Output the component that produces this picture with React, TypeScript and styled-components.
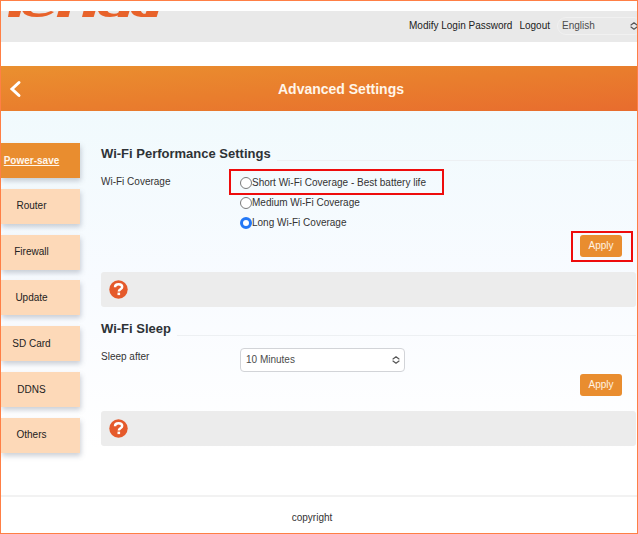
import React, { useState } from "react";
import styled, { createGlobalStyle } from "styled-components";

const Global = createGlobalStyle`
  *, *::before, *::after { box-sizing: border-box; }
  body {
    margin: 0;
    background: #fff;
    color: #333;
    font-family: "Liberation Sans", Arial, Helvetica, sans-serif;
    font-size: 10px;
    line-height: 20px;
  }
`;

const Page = styled.div`
  display: flex;
  flex-direction: column;
  min-height: 100vh;
  border: 1px solid #ff7f45;
  padding-top: 10px;
  overflow: hidden;
`;

const TopBar = styled.header`
  display: flex;
  justify-content: space-between;
  align-items: flex-start;
  height: 31px;
  padding-left: 7px;
  background: #e9e9e9;
`;

const Logo = styled.svg`
  display: block;
  width: 152px;
  height: 6px;
`;

const TopNav = styled.nav`
  display: flex;
  align-items: center;
  gap: 7px;
  padding-top: 5px;
`;

const TopLink = styled.a`
  color: #222;
  text-decoration: none;
  white-space: nowrap;
`;

const SelectBox = styled.div<{ $pill?: boolean }>`
  display: grid;
  align-items: center;
  width: ${(p) => (p.$pill ? "86px" : "165px")};
  margin-right: ${(p) => (p.$pill ? "-6px" : "0")};
  > * { grid-area: 1 / 1; }
  > svg {
    justify-self: end;
    margin-right: 5px;
    pointer-events: none;
  }
`;

const Select = styled.select<{ $pill?: boolean }>`
  appearance: none;
  width: 100%;
  height: ${(p) => (p.$pill ? "18px" : "24px")};
  padding: 0 ${(p) => (p.$pill ? "4px" : "5px")};
  border: 1px solid ${(p) => (p.$pill ? "#f1f1f1" : "#d2d4d8")};
  border-radius: ${(p) => (p.$pill ? "9px" : "4px")};
  background: ${(p) => (p.$pill ? "transparent" : "#fff")};
  color: #4c4c4c;
  font: inherit;
  line-height: 16px;
`;

const TitleBar = styled.div`
  display: grid;
  grid-template-columns: 84px 1fr 40px;
  align-items: center;
  height: 45px;
  margin-top: 24px;
  background: linear-gradient(to bottom right, #ea902f, #e97e2d 50%, #e86c2e);
`;

const BackButton = styled.button`
  display: flex;
  justify-self: start;
  padding: 0 0 0 8px;
  border: 0;
  background: none;
  cursor: pointer;
`;

const Title = styled.h1`
  margin: 0;
  color: #fff6ea;
  font-size: 14px;
  line-height: 20px;
  text-align: center;
`;

const Body = styled.div`
  display: grid;
  grid-template-columns: 79px minmax(0, 1fr);
  align-content: start;
  gap: 21px;
  flex: 1;
  padding: 32px 1px 36px 0;
  background: linear-gradient(#f1fafd, #f8fbff 45%, #fff 88%);
`;

const SideNav = styled.nav`
  display: flex;
  flex-direction: column;
  justify-content: space-between;
  padding-bottom: 4px;
`;

const SideItem = styled.a<{ $active?: boolean }>`
  display: flex;
  align-items: center;
  justify-content: center;
  height: 35px;
  padding-right: 18px;
  background: ${(p) => (p.$active ? "#e98d2f" : "#fdd9b8")};
  color: ${(p) => (p.$active ? "#fff6ea" : "#222")};
  font-weight: ${(p) => (p.$active ? "bold" : "normal")};
  text-decoration: ${(p) => (p.$active ? "underline" : "none")};
  box-shadow: 1px 3px 5px rgba(90, 100, 120, 0.3);
  white-space: nowrap;
`;

const Section = styled.section`
  display: flex;
  flex-direction: column;
  padding-bottom: 11px;
`;

const Heading = styled.h2`
  display: flex;
  align-items: center;
  gap: 6px;
  margin: 0;
  color: #2e3236;
  font-size: 13px;
  line-height: 22px;
  &::after {
    content: "";
    flex: 1;
    height: 1px;
    margin-top: 13px;
    background: #edf0f3;
  }
`;

const Field = styled.div`
  display: grid;
  grid-template-columns: 139px minmax(0, 1fr);
  align-items: start;
  padding-top: 8px;
`;

const FieldName = styled.label`
  line-height: 18px;
`;

const Options = styled.div`
  display: flex;
  flex-direction: column;
  align-items: flex-start;
`;

const Option = styled.label<{ $marked?: boolean }>`
  position: relative;
  display: flex;
  align-items: center;
  height: 20px;
  line-height: 22px;
  white-space: nowrap;
  &::after {
    content: "";
    display: ${(p) => (p.$marked ? "block" : "none")};
    position: absolute;
    inset: -4px -18px -2px -11px;
    border: 2px solid #ee0c0c;
    pointer-events: none;
  }
`;

const Radio = styled.input`
  appearance: none;
  width: 12px;
  height: 12px;
  margin: 0;
  border: 1px solid #7b7b7b;
  border-radius: 50%;
  background: #fff;
  &:checked { border: 3px solid #2478f6; }
`;

const Actions = styled.div`
  display: flex;
  justify-content: flex-end;
  padding: 2px 14px 0 0;
`;

const Mark = styled.div<{ $on?: boolean }>`
  position: relative;
  &::after {
    content: "";
    display: ${(p) => (p.$on ? "block" : "none")};
    position: absolute;
    inset: -4px -11px -5px -9px;
    border: 2px solid #ee0c0c;
    pointer-events: none;
  }
`;

const Apply = styled.button`
  display: block;
  width: 42px;
  height: 22px;
  padding: 0;
  border: 0;
  border-radius: 3px;
  background: #e98d2f;
  color: #fff3e4;
  font: inherit;
  cursor: pointer;
`;

const Help = styled.div`
  display: flex;
  align-items: center;
  height: 35px;
  margin-top: 15px;
  padding-left: 8px;
  border-radius: 3px;
  background: #ececec;
`;

const HelpButton = styled.button`
  display: flex;
  padding: 0;
  border: 0;
  background: none;
  cursor: pointer;
`;

const Footer = styled.footer`
  padding: 11px 14px 5px 0;
  border-top: 2px solid #f2f2f2;
  background: #fff;
  text-align: center;
`;

const Arrows = () => (
  <svg width="8" height="8" viewBox="0 0 8 8" fill="none" stroke="#555" strokeWidth="1.2" strokeLinecap="round" strokeLinejoin="round">
    <path d="M1 3 4 .8 7 3M1 5l3 2.200L7 5" />
  </svg>
);

const HelpIcon = () => (
  <HelpButton type="button" aria-label="Help">
    <svg width="19" height="19" viewBox="0 0 19 19">
      <circle cx="9.5" cy="9.5" r="9.2" fill="#e55a2b" />
      <path d="M6 7.200C6 5.100 7.500 4.200 9.600 4.200s3.600 1 3.600 2.700c0 2.400-3.400 2.200-3.400 4.500" fill="none" stroke="#fff" strokeWidth="2.4" />
      <rect x="8.500" y="12.600" width="2.600" height="2.500" fill="#fff" />
    </svg>
  </HelpButton>
);

const sections = ["Power-save", "Router", "Firewall", "Update", "SD Card", "DDNS", "Others"];
const coverages = ["Short Wi-Fi Coverage - Best battery life", "Medium Wi-Fi Coverage", "Long Wi-Fi Coverage"];

export default function App() {
  const [coverage, setCoverage] = useState(2);
  return (
    <>
      <Global />
      <Page>
        <TopBar>
          <Logo viewBox="0 0 152 6" fill="#e8622a" role="img" aria-label="Logo">
            <path d="M1 0H13L11.300 6H0Z" />
            <path d="M14.300 0H23Q24 2.500 31 2.500 38 2.500 43 0L46 1Q40 6 29 6 17 6 14.300 0Z" />
            <path d="M50.500 0H62L60.500 6H48.700Z" />
            <path d="M75.500 0H87.500L85.700 6H74Z" />
            <path d="M90 0H99.500Q101 2.800 106 2.800 109 2.800 110.500 1.500L111 0H121.500L119.700 6H109.500L110 4.600Q107 6 102 6 92 6 90 0Z" />
            <path d="M123 0H133Q134 3 137.500 2.800L138.500 0H150.500L148.700 6H133Q124 5 123 0Z" />
          </Logo>
          <TopNav>
            <TopLink href="#password">Modify Login Password</TopLink>
            <TopLink href="#logout">Logout</TopLink>
            <SelectBox $pill>
              <Select $pill aria-label="Language" defaultValue="English">
                <option>English</option>
              </Select>
              <Arrows />
            </SelectBox>
          </TopNav>
        </TopBar>
        <TitleBar>
          <BackButton type="button" aria-label="Back">
            <svg width="14" height="18" viewBox="0 0 14 18" fill="none" stroke="#fff" strokeWidth="3" strokeLinecap="round">
              <path d="M10 2.500 3 9l7 6.500" />
            </svg>
          </BackButton>
          <Title>Advanced Settings</Title>
        </TitleBar>
        <Body>
          <SideNav>
            {sections.map((name, i) => (
              <SideItem key={name} href={"#" + name} $active={i === 0}>{name}</SideItem>
            ))}
          </SideNav>
          <main>
            <Section>
              <Heading>Wi-Fi Performance Settings</Heading>
              <Field role="radiogroup" aria-labelledby="coverage">
                <FieldName as="span" id="coverage">Wi-Fi Coverage</FieldName>
                <Options>
                  {coverages.map((name, i) => (
                    <Option key={name} $marked={i === 0}>
                      <Radio type="radio" name="coverage" checked={coverage === i} onChange={() => setCoverage(i)} />
                      {name}
                    </Option>
                  ))}
                </Options>
              </Field>
              <Actions><Mark $on><Apply type="button">Apply</Apply></Mark></Actions>
              <Help><HelpIcon /></Help>
            </Section>
            <Section>
              <Heading>Wi-Fi Sleep</Heading>
              <Field>
                <FieldName htmlFor="sleep">Sleep after</FieldName>
                <SelectBox>
                  <Select id="sleep" defaultValue="10 Minutes">
                    <option>10 Minutes</option>
                  </Select>
                  <Arrows />
                </SelectBox>
              </Field>
              <Actions><Mark><Apply type="button">Apply</Apply></Mark></Actions>
              <Help><HelpIcon /></Help>
            </Section>
          </main>
        </Body>
        <Footer>copyright</Footer>
      </Page>
    </>
  );
}
